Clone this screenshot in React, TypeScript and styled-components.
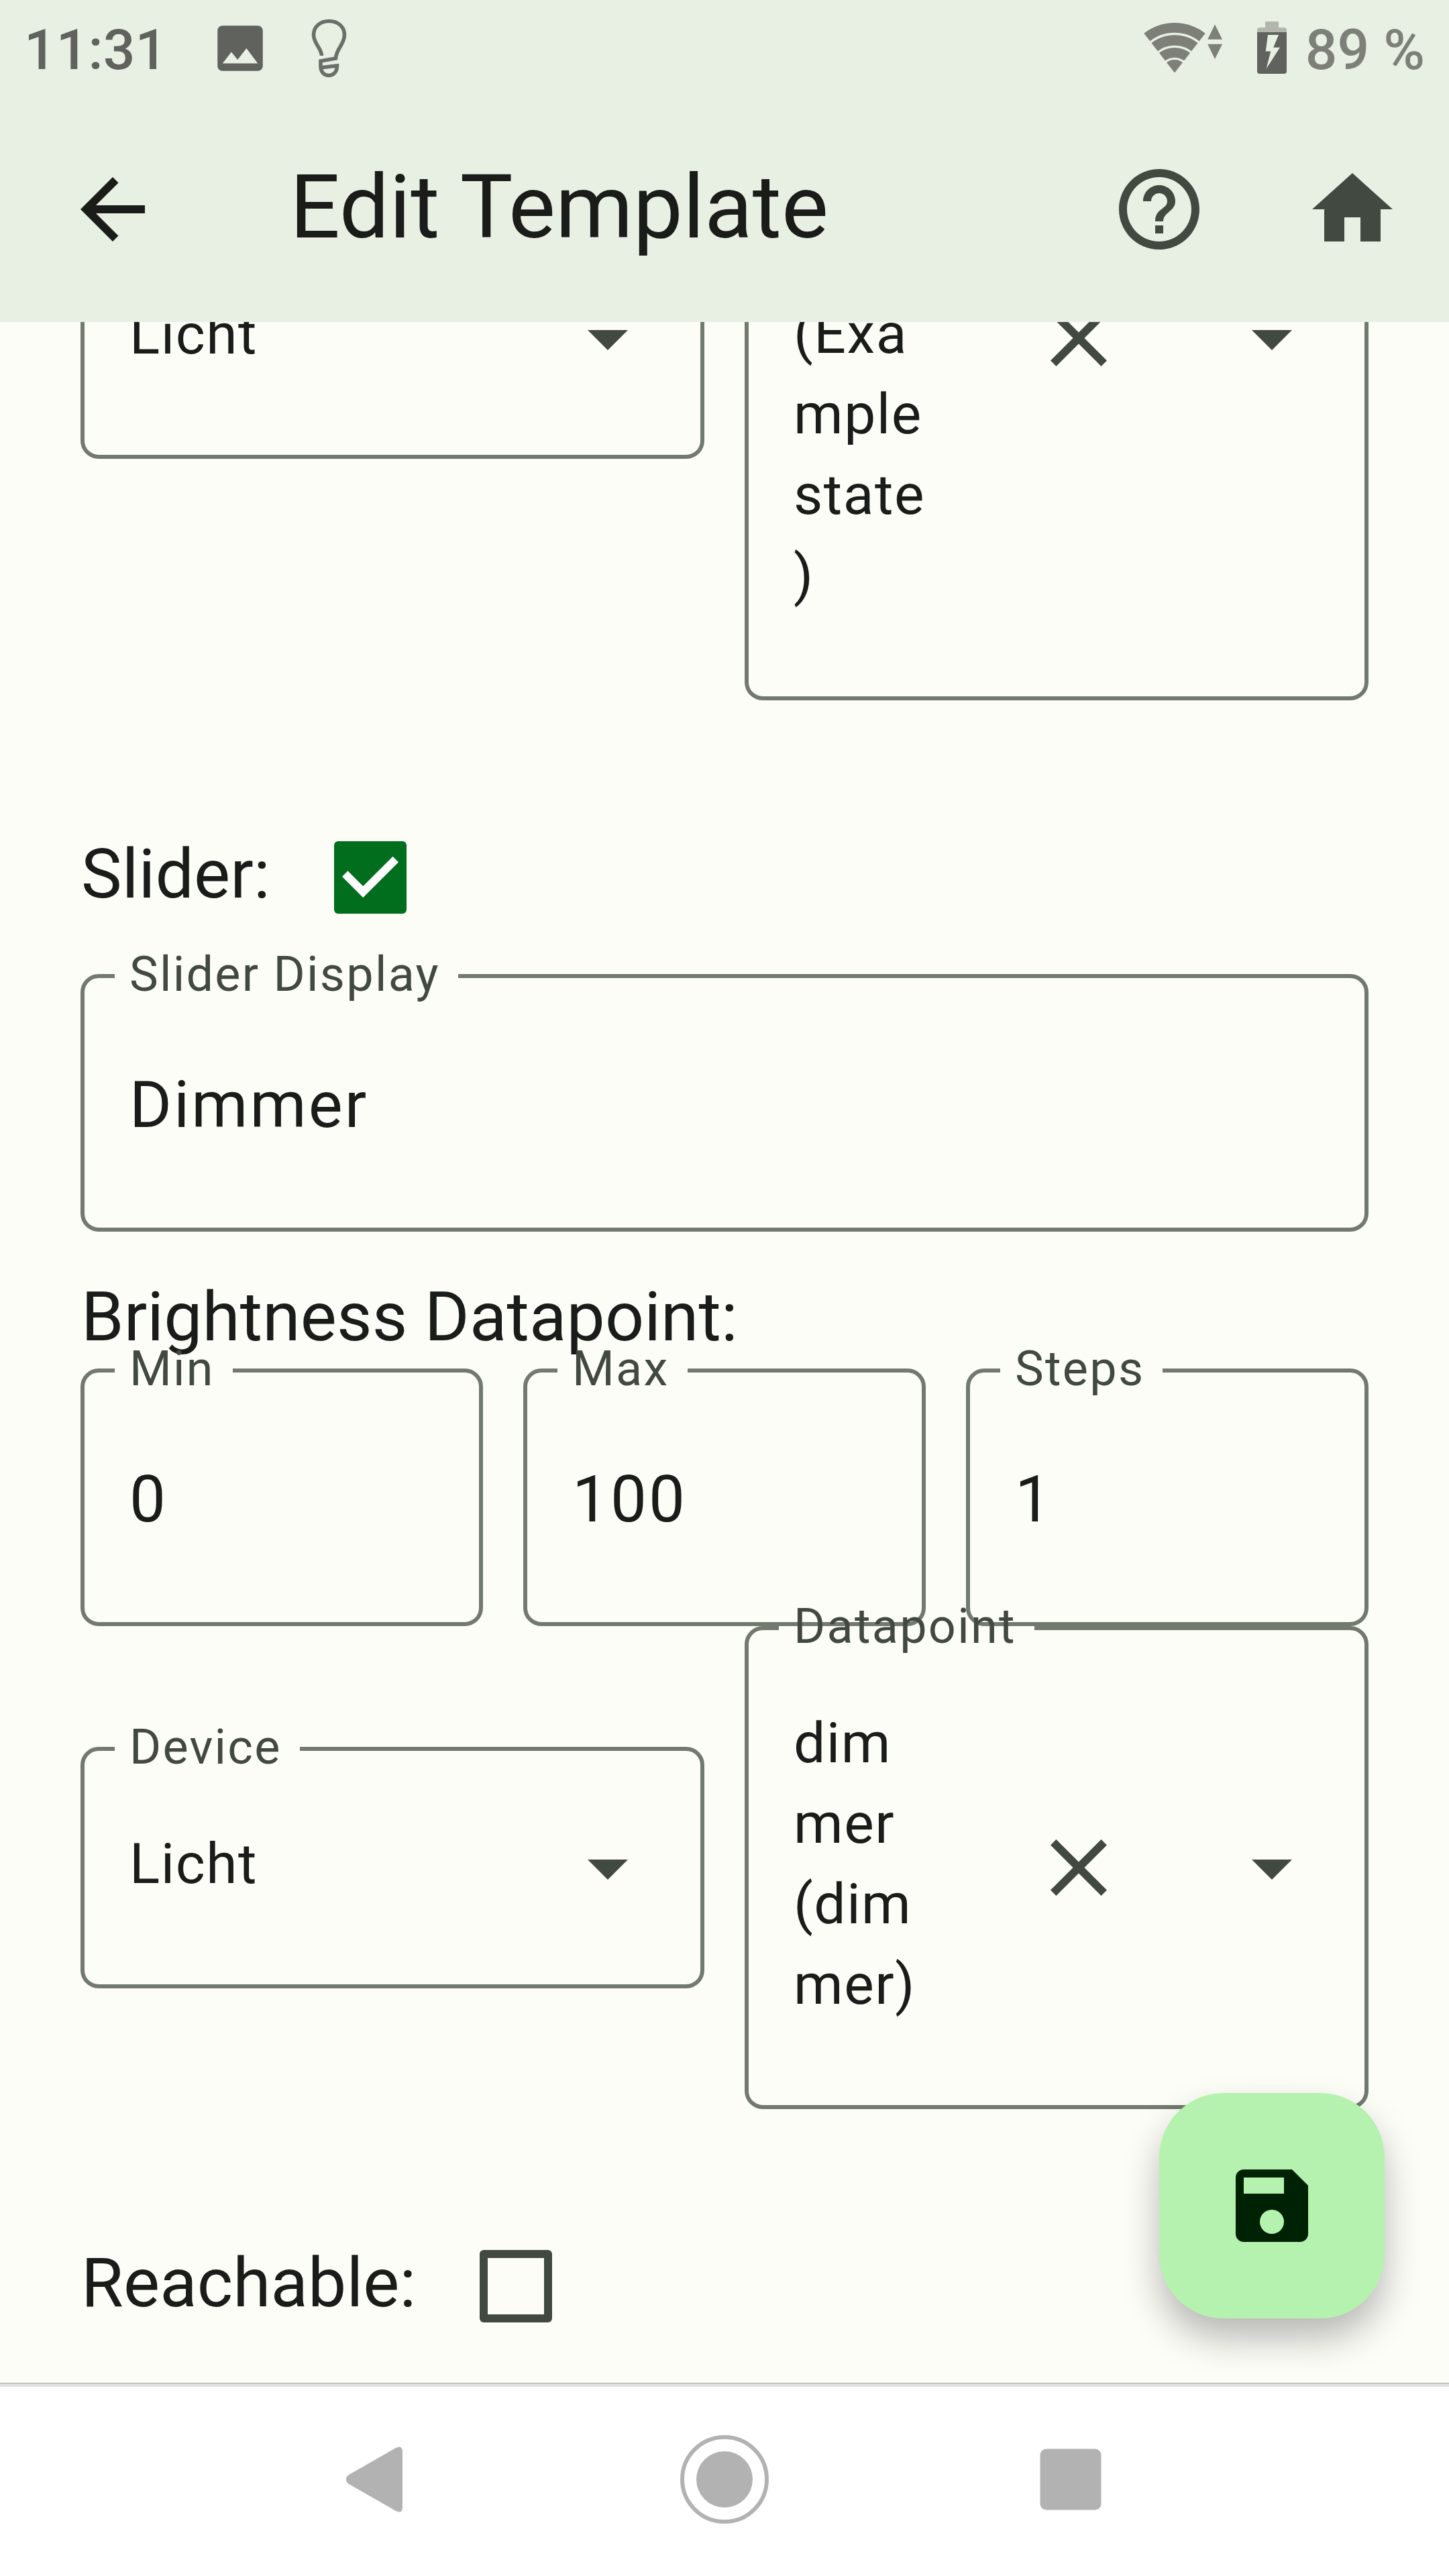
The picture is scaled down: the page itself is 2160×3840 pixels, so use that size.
import React from 'react';
import styled, { createGlobalStyle, css } from 'styled-components';

const color = {
  surface: '#fcfdf7',
  bar: '#e8f0e4',
  text: '#1a1c19',
  muted: '#424940',
  outline: '#72796f',
  primary: '#006e1c',
  fab: '#b6f2af',
  onFab: '#002204',
  status: '#5f625d',
  statusSoft: '#7c8079',
  nav: '#b2b2b2',
};

const GlobalStyle = createGlobalStyle`
  *, *::before, *::after { box-sizing: border-box; }
  html, body { margin: 0; padding: 0; background: #fff; }
  body { font-family: Roboto, "Liberation Sans", sans-serif; color: ${color.text}; }
`;

const Screen = styled.div`
  width: 2160px;
  height: 3840px;
  display: flex;
  flex-direction: column;
  overflow: hidden;
  position: relative;
  background: ${color.surface};
`;

const StatusBar = styled.header`
  flex: none;
  height: 144px;
  padding: 0 36px;
  display: flex;
  justify-content: space-between;
  background: ${color.bar};
`;

const StatusGroup = styled.div`
  display: flex;
  align-items: flex-start;
`;

const StatusText = styled.span<{ $soft?: boolean }>`
  font-size: 84px;
  font-weight: 500;
  line-height: 144px;
  height: 144px;
  margin-top: 3px;
  margin-left: ${(p) => (p.$soft ? 28 : 0)}px;
  white-space: nowrap;
  color: ${(p) => (p.$soft ? color.statusSoft : color.status)};
`;

const StatusGlyph = styled.svg<{ $gap: number }>`
  flex: none;
  display: block;
  margin-left: ${(p) => p.$gap}px;
`;

const AppBar = styled.nav`
  flex: none;
  height: 336px;
  display: flex;
  align-items: center;
  background: ${color.bar};
`;

const IconButton = styled.button<{ $width?: number }>`
  flex: none;
  width: ${(p) => p.$width ?? 288}px;
  height: 288px;
  padding: 0;
  border: 0;
  background: none;
  color: ${color.muted};
  display: flex;
  align-items: center;
  justify-content: center;
`;

const BackButton = styled(IconButton)`
  color: ${color.text};
`;

const Title = styled.h1`
  flex: 1;
  margin: 0;
  padding: 0 0 6px 96px;
  font-size: 132px;
  font-weight: 400;
  line-height: 168px;
`;

const Content = styled.main`
  flex: none;
  height: 3072px;
  overflow: hidden;
  display: flex;
  flex-direction: column;
  padding: 0 120px;
`;

const Row = styled.div<{ $scrolled?: number }>`
  flex: none;
  display: flex;
  align-items: center;
  gap: 60px;
  margin-top: ${(p) => -(p.$scrolled ?? 0)}px;
`;

const Outline = styled.fieldset<{ $height: number }>`
  flex: 1 1 0;
  min-width: 0;
  height: ${(p) => p.$height}px;
  margin: 0;
  padding: 0 0 0 45px;
  border: 6px solid ${color.outline};
  border-radius: 27px;
`;

const FieldLabel = styled.legend`
  height: 6px;
  padding: 0 27px 0 22px;
  font-size: 72px;
  line-height: 2px;
  letter-spacing: 2.25px;
  white-space: nowrap;
  color: ${color.muted};
`;

const FieldBody = styled.div<{ $height: number }>`
  height: ${(p) => p.$height - 12}px;
  padding-left: 22px;
  display: flex;
  align-items: center;
`;

const InputValue = styled.span`
  padding-top: 6px;
  font-size: 96px;
  line-height: 144px;
  letter-spacing: 3px;
`;

const SelectValue = styled.div<{ $bottom?: boolean }>`
  flex: 1;
  display: flex;
  flex-direction: column;
  padding-bottom: 11px;
  font-size: 84px;
  line-height: 120px;
  letter-spacing: 1.5px;
  ${(p) =>
    p.$bottom &&
    css`
      align-self: flex-end;
      padding-bottom: 120px;
    `}
`;

const SelectActions = styled.div`
  flex: none;
  display: flex;
  margin-right: -6px;
`;

const CheckRow = styled.label`
  flex: none;
  height: 288px;
  margin-top: 120px;
  display: flex;
  align-items: center;
`;

const SectionText = styled.span`
  font-size: 102px;
  line-height: 144px;
  padding: 0 0 10px 1px;
  letter-spacing: 0.1px;
  white-space: nowrap;
`;

const CheckHit = styled.span`
  width: 288px;
  margin-left: 5px;
  display: flex;
  justify-content: center;
`;

const CheckBox = styled.span<{ $checked?: boolean }>`
  width: 108px;
  height: 108px;
  border-radius: 6px;
  ${(p) =>
    p.$checked
      ? css`
          background: ${color.primary};
        `
      : css`
          border: 12px solid ${color.muted};
        `}
  svg {
    display: block;
  }
`;

const SectionHeading = styled.div`
  flex: none;
  height: 204px;
  padding-top: 55px;
`;

const Fab = styled.button`
  position: absolute;
  right: 96px;
  bottom: 384px;
  width: 336px;
  height: 336px;
  padding: 0;
  border: 0;
  border-radius: 96px;
  background: ${color.fab};
  color: ${color.onFab};
  box-shadow: 0 30px 54px rgba(0, 0, 0, 0.27);
  display: flex;
  align-items: center;
  justify-content: center;
`;

const NavBar = styled.footer`
  flex: none;
  height: 288px;
  padding-bottom: 2px;
  background: #fff;
  border-top: 1px solid #a4a5a2;
  box-shadow: inset 0 5px 0 #e0e0e0;
  display: flex;
  align-items: center;
  justify-content: center;
  gap: 372px;
`;

const NavGlyph = styled.svg`
  display: block;
  flex: none;
  fill: ${color.nav};
`;

const Icon = ({ d }: { d: string }) => (
  <svg width="144" height="144" viewBox="0 0 24 24" fill="currentColor">
    <path d={d} />
  </svg>
);

const paths = {
  back: 'M20 11H7.83l5.59-5.59L12 4l-8 8 8 8 1.41-1.41L7.83 13H20v-2z',
  help: 'M11 18h2v-2h-2v2zm1-16C6.48 2 2 6.48 2 12s4.48 10 10 10 10-4.48 10-10S17.52 2 12 2zm0 18c-4.41 0-8-3.59-8-8s3.59-8 8-8 8 3.59 8 8-3.59 8-8 8zm0-14c-2.21 0-4 1.79-4 4h2c0-1.1.9-2 2-2s2 .9 2 2c0 2-3 1.75-3 5h2c0-2.25 3-2.5 3-5 0-2.21-1.79-4-4-4z',
  home: 'M10 20v-6h4v6h5v-8h3L12 3 2 12h3v8z',
  close:
    'M19 6.41L17.59 5 12 10.59 6.41 5 5 6.41 10.59 12 5 17.59 6.41 19 12 13.41 17.59 19 19 17.59 13.41 12z',
  drop: 'M7 10l5 5 5-5z',
  save: 'M17 3H5c-1.11 0-2 .9-2 2v14c0 1.1.89 2 2 2h14c1.1 0 2-.9 2-2V7l-4-4zm-5 16c-1.66 0-3-1.34-3-3s1.34-3 3-3 3 1.34 3 3-1.34 3-3 3zm3-10H5V5h10v4z',
};

const TextField = ({ label, value }: { label: string; value: string }) => (
  <Outline $height={384}>
    <FieldLabel>{label}</FieldLabel>
    <FieldBody $height={384}>
      <InputValue>{value}</InputValue>
    </FieldBody>
  </Outline>
);

type SelectProps = {
  label?: string;
  lines: string[];
  height: number;
  clearable?: boolean;
  bottom?: boolean;
};

const SelectField = ({ label, lines, height, clearable, bottom }: SelectProps) => (
  <Outline $height={height}>
    {label && <FieldLabel>{label}</FieldLabel>}
    <FieldBody $height={height}>
      <SelectValue $bottom={bottom}>
        {lines.map((line) => (
          <span key={line}>{line}</span>
        ))}
      </SelectValue>
      <SelectActions>
        {clearable && (
          <IconButton aria-label="Clear">
            <Icon d={paths.close} />
          </IconButton>
        )}
        <IconButton aria-label="Open">
          <Icon d={paths.drop} />
        </IconButton>
      </SelectActions>
    </FieldBody>
  </Outline>
);

const CheckField = ({ label, checked }: { label: string; checked?: boolean }) => (
  <CheckRow>
    <SectionText>{label}</SectionText>
    <CheckHit>
      <CheckBox $checked={checked}>
        {checked && (
          <svg width="108" height="108" viewBox="0 0 108 108">
            <path d="M16.2 48.6L43.2 75.6L91.8 27" fill="none" stroke="#fff" strokeWidth="12" />
          </svg>
        )}
      </CheckBox>
    </CheckHit>
  </CheckRow>
);

const PictureGlyph = () => (
  <StatusGlyph $gap={64} width="90" height="144" viewBox="0 -7.2 24 38.4" fill={color.status}>
    <path d="M21 19V5c0-1.1-.9-2-2-2H5c-1.1 0-2 .9-2 2v14c0 1.1.9 2 2 2h14c1.1 0 2-.9 2-2zM8.5 13.5l2.5 3.01L14.5 12l4.5 6H5l3.5-4.5z" />
  </StatusGlyph>
);

const BulbGlyph = () => (
  <StatusGlyph
    $gap={57}
    width="60"
    height="144"
    viewBox="460 0 60 144"
    fill="none"
    stroke="#6b6f69"
    strokeWidth="5.6"
  >
    <path d="M479.5 83C479 71 467.5 65 467.5 52C467.5 40 477 31.5 490.5 31.5C504 31.5 513.5 40 513.5 52C513.5 66 501 73 500.5 87L478 91V99C478 107 483 112.5 490 112.5C497 112.5 502.5 107 502.5 98L481 100.5" />
  </StatusGlyph>
);

const WifiGlyph = () => (
  <StatusGlyph
    $gap={0}
    width="120"
    height="144"
    viewBox="1704 0 120 144"
    fill={color.statusSoft}
  >
    <path d="M1751 108.5L1705.3 49.7A74.5 74.5 0 0 1 1796.7 49.7Z" />
    <g fill="none" stroke={color.bar} strokeWidth="3.4">
      <path d="M1711 66.5A58 58 0 0 1 1791 66.5" />
      <path d="M1723.5 80.5A39.5 39.5 0 0 1 1778.5 80.5" />
      <path d="M1736 93.7A21 21 0 0 1 1766 93.7" />
    </g>
    <path d="M1811 36.5L1822 58.7H1800.2ZM1800.2 65.7H1822L1811 88Z" />
  </StatusGlyph>
);

const BatteryGlyph = () => (
  <StatusGlyph $gap={50} width="44" height="144" viewBox="1874 0 44 144">
    <path fill="#b1b7ad" d="M1886 32H1906V41H1914A4 4 0 0 1 1918 45V48H1874V45A4 4 0 0 1 1878 41H1886Z" />
    <path fill={color.status} d="M1874 48H1918V106A4 4 0 0 1 1914 110H1878A4 4 0 0 1 1874 106Z" />
    <path fill={color.bar} d="M1890 52H1906L1898.2 70.7H1908L1887.6 102.5L1894.3 76.5H1886.7Z" />
  </StatusGlyph>
);

export default function App() {
  return (
    <>
      <GlobalStyle />
      <Screen>
        <StatusBar>
          <StatusGroup>
            <StatusText>11:31</StatusText>
            <PictureGlyph />
            <BulbGlyph />
          </StatusGroup>
          <StatusGroup>
            <WifiGlyph />
            <BatteryGlyph />
            <StatusText $soft>89 %</StatusText>
          </StatusGroup>
        </StatusBar>

        <AppBar>
          <BackButton $width={336} aria-label="Back">
            <Icon d={paths.back} />
          </BackButton>
          <Title>Edit Template</Title>
          <IconButton aria-label="Help">
            <Icon d={paths.help} />
          </IconButton>
          <IconButton aria-label="Home">
            <Icon d={paths.home} />
          </IconButton>
        </AppBar>

        <Content>
          <Row $scrolled={516}>
            <SelectField lines={['Licht']} height={360} />
            <SelectField lines={['(Exa', 'mple', 'state', ')']} height={1080} clearable bottom />
          </Row>

          <CheckField label="Slider:" checked />
          <Row>
            <TextField label="Slider Display" value="Dimmer" />
          </Row>

          <SectionHeading>
            <SectionText>Brightness Datapoint:</SectionText>
          </SectionHeading>
          <Row>
            <TextField label="Min" value="0" />
            <TextField label="Max" value="100" />
            <TextField label="Steps" value="1" />
          </Row>
          <Row>
            <SelectField label="Device" lines={['Licht']} height={360} />
            <SelectField
              label="Datapoint"
              lines={['dim', 'mer', '(dim', 'mer)']}
              height={720}
              clearable
            />
          </Row>

          <CheckField label="Reachable:" />
        </Content>

        <Fab aria-label="Save">
          <Icon d={paths.save} />
        </Fab>

        <NavBar>
          <NavGlyph width="144" height="144" viewBox="492 3624 144 144">
            <path d="M518.5 3690L590 3649Q600 3644 600 3655V3737Q600 3748 590 3743L518.5 3702Q513 3696 518.5 3690Z" />
          </NavGlyph>
          <NavGlyph width="144" height="144" viewBox="0 0 144 144">
            <circle cx="72" cy="72" r="42" />
            <circle cx="72" cy="72" r="63" fill="none" stroke={color.nav} strokeWidth="6" />
          </NavGlyph>
          <NavGlyph width="144" height="144" viewBox="0 0 144 144">
            <rect x="26.5" y="26.5" width="91" height="91" rx="9" />
          </NavGlyph>
        </NavBar>
      </Screen>
    </>
  );
}
